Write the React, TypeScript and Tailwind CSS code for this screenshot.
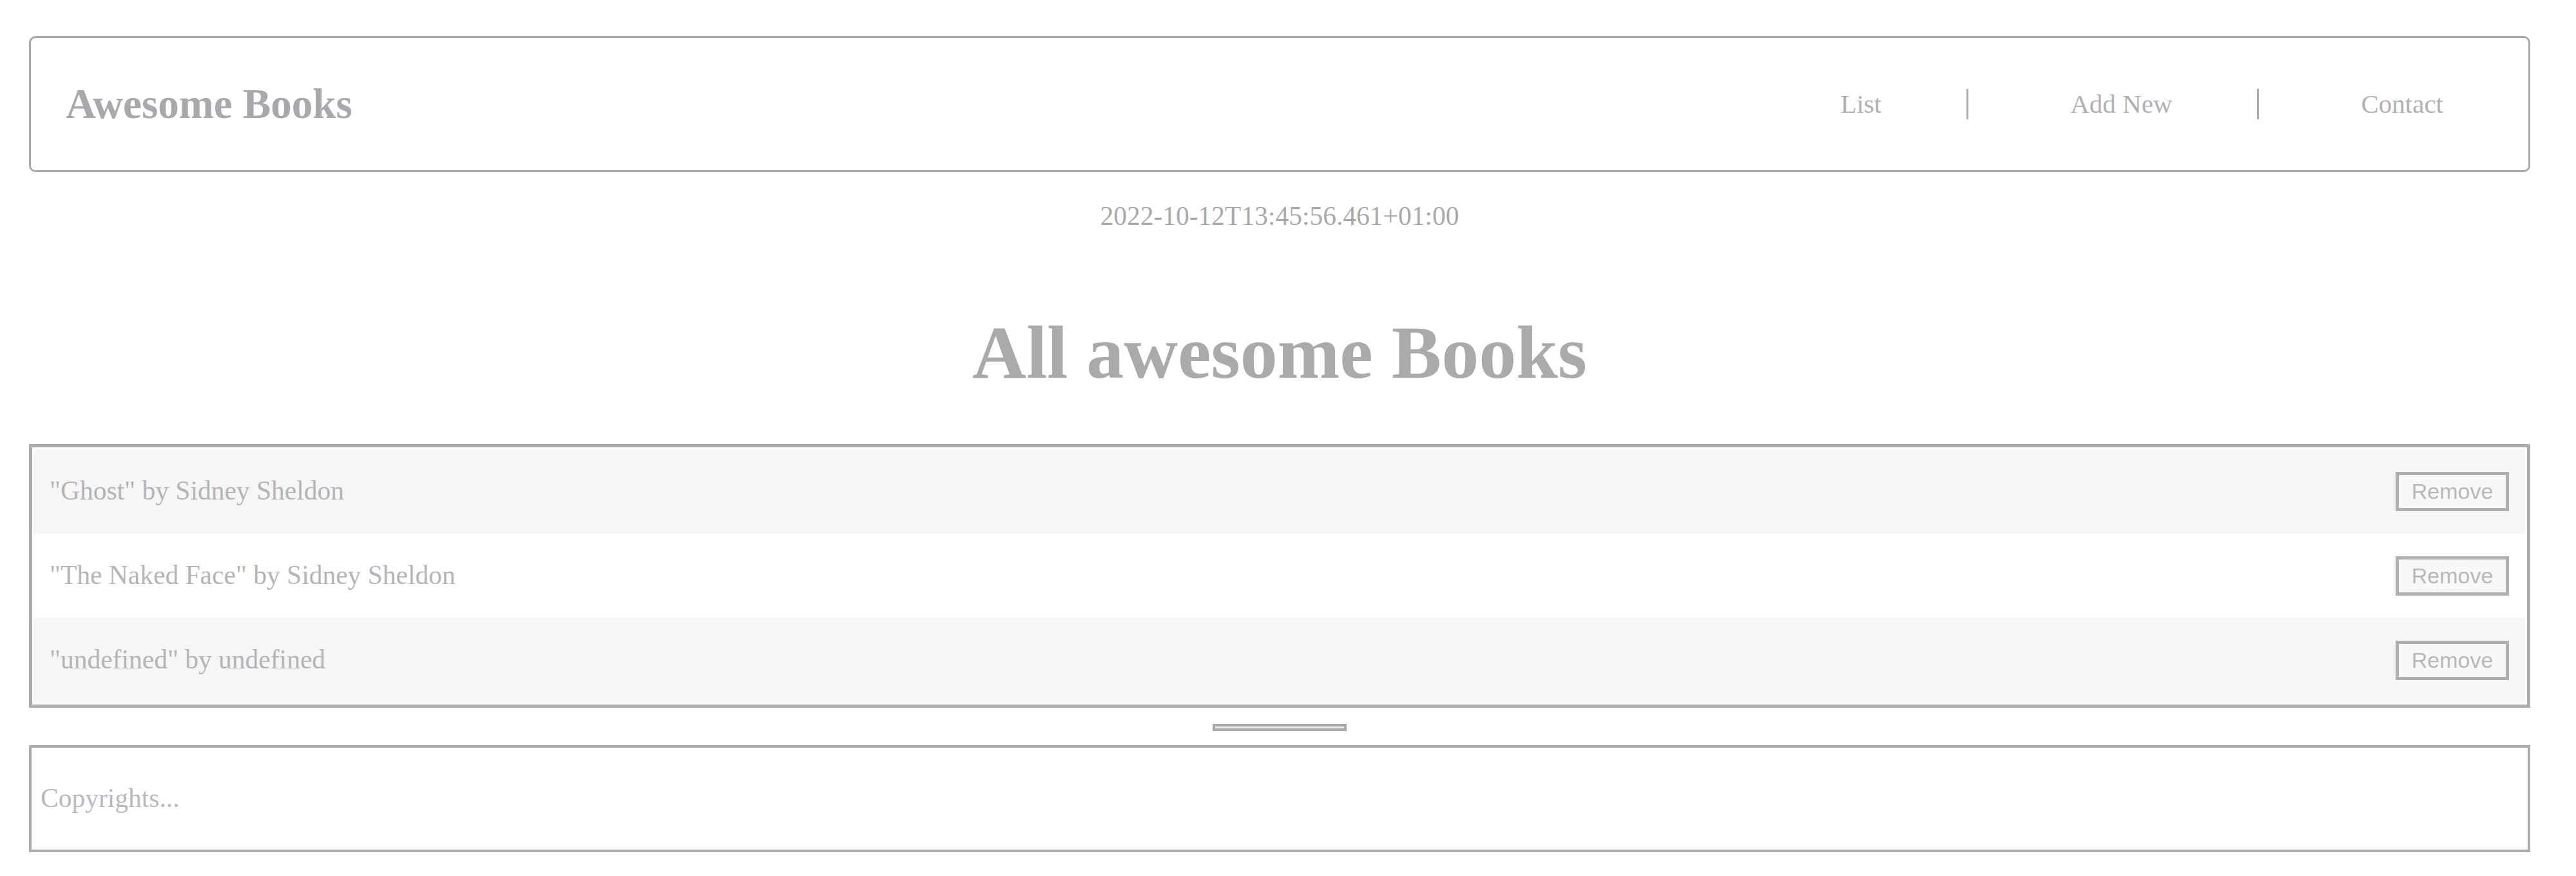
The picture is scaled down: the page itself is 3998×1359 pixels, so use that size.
const books = [
  { title: "Ghost", author: "Sidney Sheldon" },
  { title: "The Naked Face", author: "Sidney Sheldon" },
  { title: "undefined", author: "undefined" },
];

const navLinks = ["List", "Add New", "Contact"];

export default function App() {
  return (
    <div className="min-h-[1359px] bg-white pt-[56px] font-['Liberation_Serif',serif]">
      <div className="ml-[45px] w-[3882px]">
        <header className="flex h-[211px] items-center justify-between rounded-[10px] border-[3px] border-[#aaaaaa] pl-[54px]">
          <h1 className="text-[65px] font-bold leading-none text-[#a9a9ad]">Awesome Books</h1>
          <ul className="flex items-center">
            {navLinks.map((link, i) => (
              <li
                key={link}
                className={
                  i < navLinks.length - 1
                    ? "flex h-[47px] items-center border-r-[3px] border-[#aaaaaa] pl-[158px] pr-[132px]"
                    : "flex h-[47px] items-center pl-[158px] pr-[132px]"
                }
              >
                <a className="text-[41px] leading-none text-[#b1b0b3]">{link}</a>
              </li>
            ))}
          </ul>
        </header>

        <p className="mt-[48px] text-center text-[41.5px] leading-none text-[#a9a9ab]">
          2022-10-12T13:45:56.461+01:00
        </p>

        <h2 className="mt-[132px] text-center text-[116px] font-bold leading-none text-[#aaaaaa]">
          All awesome Books
        </h2>

        <ul className="mt-[84px] border-[5px] border-[#acacac] p-[3px]">
          {books.map((book, i) => (
            <li
              key={i}
              className={
                i % 2 === 0
                  ? "flex h-[131px] items-center justify-between bg-[#f7f6f6] pl-[24px] pr-[25px]"
                  : "flex h-[131px] items-center justify-between bg-white pl-[24px] pr-[25px]"
              }
            >
              <span className="text-[41.5px] leading-none text-[#b6b4b8]">
                "{book.title}" by {book.author}
              </span>
              <button className="flex h-[61px] w-[176px] items-center justify-center border-[5px] border-[#b0b0b0] bg-[#f8f8f8] font-['Liberation_Sans',Arial,sans-serif] text-[34px] leading-none text-[#b9b9b9]">
                Remove
              </button>
            </li>
          ))}
        </ul>

        <div className="mx-auto mt-[25px] h-[11px] w-[208px] border-[4px] border-[#a9a9a9] bg-[#e9e9e9]" />

        <footer className="mt-[22px] flex h-[166px] items-center border-[4px] border-[#adadad] pl-[14px]">
          <p className="text-[41.5px] leading-none text-[#b9b8c0]">Copyrights...</p>
        </footer>
      </div>
    </div>
  );
}
